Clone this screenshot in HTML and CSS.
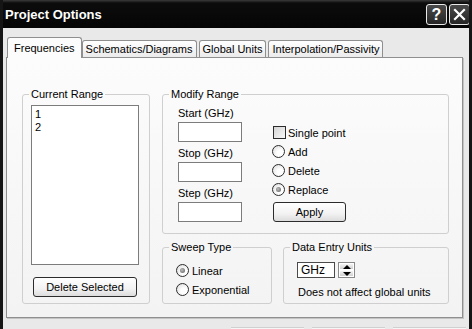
FILE: index.html
```html
<!DOCTYPE html>
<html lang="en">
<head>
    <meta charset="UTF-8">
    <title>Project Options</title>
    <link rel="stylesheet" href="styles.css">
</head>
<body>
    <div class="window">
        <div class="titlebar">
            <span class="title">Project Options</span>
            <div class="title-btns">
                <span class="tbtn help">?</span>
                <span class="tbtn close">
                    <svg width="13" height="13" viewBox="0 0 13 13"><path d="M2 2 L11 11 M11 2 L2 11" stroke="#fff" stroke-width="2.2" stroke-linecap="square"/></svg>
                </span>
            </div>
        </div>

        <div class="tabs">
            <div class="tab active">Frequencies</div>
            <div class="tab">Schematics/Diagrams</div>
            <div class="tab">Global Units</div>
            <div class="tab">Interpolation/Passivity</div>
        </div>

        <div class="panel">
            <fieldset class="group current">
                <legend>Current Range</legend>
                <div class="listbox">
                    <div>1</div>
                    <div>2</div>
                </div>
                <button class="btn delete">Delete Selected</button>
            </fieldset>

            <div class="right-col">
                <fieldset class="group modify">
                    <legend>Modify Range</legend>
                    <div class="modify-body">
                        <div class="fields">
                            <label>Start (GHz)</label>
                            <input type="text" class="field">
                            <label>Stop (GHz)</label>
                            <input type="text" class="field">
                            <label>Step (GHz)</label>
                            <input type="text" class="field">
                        </div>
                        <div class="options">
                            <div class="opt check-row"><span class="checkbox"></span>Single point</div>
                            <div class="opt"><span class="radio"></span>Add</div>
                            <div class="opt"><span class="radio"></span>Delete</div>
                            <div class="opt"><span class="radio checked"></span>Replace</div>
                            <button class="btn apply">Apply</button>
                        </div>
                    </div>
                </fieldset>

                <div class="bottom-row">
                    <fieldset class="group sweep">
                        <legend>Sweep Type</legend>
                        <div class="opt"><span class="radio checked"></span>Linear</div>
                        <div class="opt"><span class="radio"></span>Exponential</div>
                    </fieldset>
                    <fieldset class="group units">
                        <legend>Data Entry Units</legend>
                        <div class="unit-row">
                            <div class="unit-box">GHz</div>
                            <div class="spin">
                                <span class="spin-up"></span>
                                <span class="spin-down"></span>
                            </div>
                        </div>
                        <div class="note">Does not affect global units</div>
                    </fieldset>
                </div>
            </div>
        </div>

        <div class="footer">
            <span class="fbtn"></span>
            <span class="fbtn"></span>
            <span class="fbtn"></span>
        </div>
    </div>
</body>
</html>
```

FILE: styles.css
```css
body {
    margin: 0;
    font-family: 'Liberation Sans', Arial, sans-serif;
    font-size: 11px;
    color: #000;
    background: #000;
}

.window {
    box-sizing: border-box;
    width: 472px;
    height: 329px;
    overflow: hidden;
    background: #e9e9e9;
    border-left: 3px solid #151515;
    border-right: 3px solid #151515;
}

/* title bar */
.titlebar {
    height: 28px;
    margin: 0 -3px;
    padding: 0 2px 0 5px;
    display: flex;
    align-items: center;
    justify-content: space-between;
    background: linear-gradient(#3a3a3a, #0c0c0c 3px, #050505);
}

.title {
    color: #fff;
    font-weight: bold;
    font-size: 13px;
}

.title-btns {
    display: flex;
    gap: 2px;
    margin-top: 1px;
}

.tbtn {
    box-sizing: border-box;
    width: 21px;
    height: 21px;
    border: 1px solid #e8e8e8;
    border-radius: 3px;
    background: linear-gradient(#4a4a4a, #262626);
    display: flex;
    align-items: center;
    justify-content: center;
    color: #fff;
    font-weight: bold;
    font-size: 16px;
}

/* tabs */
.tabs {
    display: flex;
    align-items: flex-end;
    height: 20px;
    margin-top: 9px;
    padding-left: 4px;
}

.tab {
    box-sizing: border-box;
    height: 17px;
    padding: 0 3px;
    margin-right: 2px;
    border: 1px solid #8f8f8f;
    border-bottom: none;
    border-radius: 3px 3px 0 0;
    background: linear-gradient(#ffffff, #ebebeb);
    line-height: 16px;
}

.tab.active {
    height: 21px;
    margin-bottom: -1px;
    margin-right: 0;
    padding: 2px 6px 0;
    background: #fcfcfc;
    position: relative;
    z-index: 1;
}

/* panel */
.panel {
    box-sizing: border-box;
    height: 261px;
    margin: 0 6px 0 3px;
    padding: 30px 0 0 15px;
    border: 1px solid #8f8f8f;
    box-shadow: 1px 1px 0 #c4c4c4;
    background: linear-gradient(#fcfcfc, #f3f3f3);
    display: flex;
    gap: 12px;
}

.group {
    box-sizing: border-box;
    margin: 0;
    padding: 0 0 0 6px;
    border: 1px solid #cfcfcf;
    border-radius: 3px;
    min-width: 0;
}

.group legend {
    padding: 0 2px;
    line-height: 13px;
}

.current {
    width: 128px;
    height: 216px;
    padding-top: 4px;
    padding-left: 8px;
}

.current legend {
    margin-left: -2px;
}

.listbox {
    box-sizing: border-box;
    width: 108px;
    height: 160px;
    border: 1px solid #7c7c7c;
    background: #fff;
    padding: 2px 3px;
    line-height: 13px;
}

.btn {
    box-sizing: border-box;
    height: 20px;
    border: 1px solid #2c2c2c;
    border-radius: 3px;
    background: linear-gradient(#ffffff, #f2f2f2 60%, #dcdcdc);
    font-family: inherit;
    font-size: 11px;
    color: #000;
    padding: 0;
}

.delete {
    width: 104px;
    margin: 12px 0 0 2px;
}

.right-col {
    display: flex;
    flex-direction: column;
    gap: 7px;
    width: 287px;
}

.modify {
    height: 146px;
}

.modify-body {
    display: flex;
    gap: 30px;
    padding: 6px 0 0 9px;
}

.fields {
    display: flex;
    flex-direction: column;
    width: 64px;
}

.fields label {
    line-height: 13px;
    margin-bottom: 2px;
}

.field {
    box-sizing: border-box;
    width: 64px;
    height: 20px;
    margin: 0 0 5px;
    border: 1px solid #7c7c7c;
    background: #fff;
}

.options {
    display: flex;
    flex-direction: column;
    padding-top: 16px;
}

.opt {
    display: flex;
    align-items: center;
    height: 19px;
    gap: 3px;
}

.check-row {
    margin-left: 1px;
    gap: 2px;
}

.checkbox {
    box-sizing: border-box;
    width: 13px;
    height: 13px;
    border: 1px solid #2c2c2c;
    background: linear-gradient(135deg, #d4d4d4, #f8f8f8);
}

.radio {
    box-sizing: border-box;
    width: 13px;
    height: 13px;
    border: 1px solid #2c2c2c;
    border-radius: 50%;
    background: radial-gradient(circle at 65% 65%, #fff 30%, #d6d6d6);
    display: flex;
    align-items: center;
    justify-content: center;
}

.radio.checked::after {
    content: "";
    width: 5px;
    height: 5px;
    border-radius: 50%;
    background: radial-gradient(circle at 40% 40%, #bdbdbd, #5a5a5a);
}

.apply {
    width: 73px;
    margin: 3px 0 0 1px;
}

.bottom-row {
    display: flex;
    gap: 11px;
}

.sweep {
    width: 110px;
    height: 63px;
    padding-top: 7px;
}

.sweep .opt {
    margin-left: 7px;
}

.units {
    width: 166px;
    height: 63px;
    padding-top: 8px;
}

.unit-row {
    display: flex;
    gap: 3px;
    margin-left: 7px;
}

.unit-box {
    box-sizing: border-box;
    width: 38px;
    height: 16px;
    border: 1px solid #4a4a4a;
    background: #fff;
    padding-left: 3px;
    line-height: 14px;
    font-size: 12px;
}

.spin {
    box-sizing: border-box;
    width: 17px;
    height: 16px;
    border: 1px solid #8a8a8a;
    background: #d9d9d9;
    display: flex;
    flex-direction: column;
}

.spin span {
    flex: 1;
    display: flex;
    align-items: center;
    justify-content: center;
    background: linear-gradient(#f4f4f4, #d0d0d0);
    border: 1px solid #fff;
}

.spin-up::after {
    content: "";
    border-left: 4px solid transparent;
    border-right: 4px solid transparent;
    border-bottom: 4px solid #000;
}

.spin-down::after {
    content: "";
    border-left: 4px solid transparent;
    border-right: 4px solid transparent;
    border-top: 4px solid #000;
}

.note {
    margin: 8px 0 0 8px;
    line-height: 13px;
}

/* bottom buttons, cut off by the window edge */
.footer {
    display: flex;
    justify-content: flex-end;
    gap: 8px;
    padding: 9px 3px 0 0;
}

.fbtn {
    width: 73px;
    height: 10px;
    border-top: 1px solid #d0d0d0;
    background: #f6f6f6;
}
```
